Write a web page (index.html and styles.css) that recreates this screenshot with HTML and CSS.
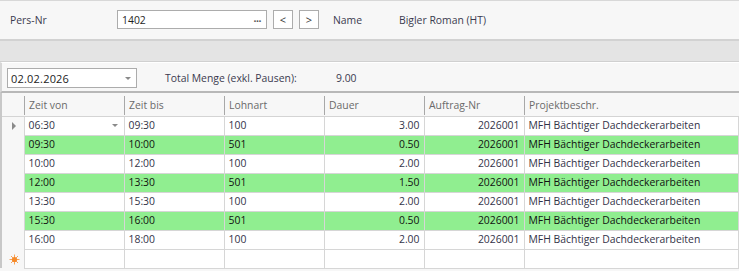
FILE: index.html
```html
<!DOCTYPE html>
<html lang="de">
<head>
    <meta charset="UTF-8">
    <title>Zeiterfassung</title>
    <link rel="stylesheet" href="styles.css">
</head>
<body>
    <div class="top-panel">
        <span class="label label-pers">Pers-Nr</span>
        <div class="textbox">
            <span>1402</span>
            <span class="ellipsis">...</span>
        </div>
        <button class="nav-btn">&lt;</button>
        <button class="nav-btn">&gt;</button>
        <span class="label label-name">Name</span>
        <span class="label">Bigler Roman (HT)</span>
    </div>

    <div class="band"></div>

    <div class="filter-panel">
        <div class="combo">
            <span>02.02.2026</span>
            <span class="combo-arrow"></span>
        </div>
        <span class="label label-total">Total Menge (exkl. Pausen):</span>
        <span class="label">9.00</span>
    </div>

    <table class="grid">
        <thead>
            <tr>
                <th class="indicator"></th>
                <th><span>Zeit von</span></th>
                <th><span>Zeit bis</span></th>
                <th><span>Lohnart</span></th>
                <th><span>Dauer</span></th>
                <th><span>Auftrag-Nr</span></th>
                <th class="last"><span>Projektbeschr.</span></th>
            </tr>
        </thead>
        <tbody>
            <tr>
                <td class="indicator"><span class="row-arrow"></span></td>
                <td><div class="editor">06:30<span class="cell-arrow"></span></div></td>
                <td>09:30</td>
                <td>100</td>
                <td class="num">3.00</td>
                <td class="num">2026001</td>
                <td>MFH Bächtiger Dachdeckerarbeiten</td>
            </tr>
            <tr class="pause">
                <td class="indicator"></td>
                <td>09:30</td>
                <td>10:00</td>
                <td>501</td>
                <td class="num">0.50</td>
                <td class="num">2026001</td>
                <td>MFH Bächtiger Dachdeckerarbeiten</td>
            </tr>
            <tr>
                <td class="indicator"></td>
                <td>10:00</td>
                <td>12:00</td>
                <td>100</td>
                <td class="num">2.00</td>
                <td class="num">2026001</td>
                <td>MFH Bächtiger Dachdeckerarbeiten</td>
            </tr>
            <tr class="pause">
                <td class="indicator"></td>
                <td>12:00</td>
                <td>13:30</td>
                <td>501</td>
                <td class="num">1.50</td>
                <td class="num">2026001</td>
                <td>MFH Bächtiger Dachdeckerarbeiten</td>
            </tr>
            <tr>
                <td class="indicator"></td>
                <td>13:30</td>
                <td>15:30</td>
                <td>100</td>
                <td class="num">2.00</td>
                <td class="num">2026001</td>
                <td>MFH Bächtiger Dachdeckerarbeiten</td>
            </tr>
            <tr class="pause">
                <td class="indicator"></td>
                <td>15:30</td>
                <td>16:00</td>
                <td>501</td>
                <td class="num">0.50</td>
                <td class="num">2026001</td>
                <td>MFH Bächtiger Dachdeckerarbeiten</td>
            </tr>
            <tr>
                <td class="indicator"></td>
                <td>16:00</td>
                <td>18:00</td>
                <td>100</td>
                <td class="num">2.00</td>
                <td class="num">2026001</td>
                <td>MFH Bächtiger Dachdeckerarbeiten</td>
            </tr>
            <tr class="new-row">
                <td class="indicator">
                    <svg width="11" height="11" viewBox="0 0 11 11">
                        <g stroke="#f7a35c" stroke-width="1">
                            <line x1="5.5" y1="0.5" x2="5.5" y2="10.5"/>
                            <line x1="0.5" y1="5.5" x2="10.5" y2="5.5"/>
                            <line x1="2" y1="2" x2="9" y2="9"/>
                            <line x1="9" y1="2" x2="2" y2="9"/>
                        </g>
                        <circle cx="5.5" cy="5.5" r="2.6" fill="#f58a2a"/>
                    </svg>
                </td>
                <td></td>
                <td></td>
                <td></td>
                <td></td>
                <td></td>
                <td></td>
            </tr>
        </tbody>
    </table>
</body>
</html>
```

FILE: styles.css
```css
* {
    box-sizing: border-box;
    margin: 0;
    padding: 0;
}

body {
    width: 739px;
    background: #f7f7f7;
    font-family: "Open Sans", "Liberation Sans", sans-serif;
    font-size: 10.4px;
    color: #1e1e1e;
    overflow: hidden;
}

.label {
    color: #3b3b4f;
    white-space: nowrap;
}

/* Kopfbereich mit Personalnummer */
.top-panel {
    height: 41px;
    display: flex;
    align-items: center;
    padding: 0 0 1px 10px;
    border-top: 1px solid #d8d8d8;
    border-bottom: 2px solid #d2d2d2;
    background: #f7f7f7;
}

.label-pers {
    width: 107px;
}

.textbox {
    width: 150px;
    height: 19px;
    display: flex;
    align-items: center;
    justify-content: space-between;
    padding: 0 5px 0 4px;
    background: #fff;
    border: 1px solid #acacac;
}

.ellipsis {
    color: #555;
    font-weight: bold;
    letter-spacing: -0.5px;
    line-height: 1;
    margin-top: -3px;
}

.nav-btn {
    width: 20px;
    height: 19px;
    margin-left: 6px;
    background: #fff;
    border: 1px solid #acacac;
    font-family: inherit;
    font-size: 11px;
    color: #333;
    line-height: 15px;
}

.label-name {
    margin-left: 14px;
    width: 66px;
}

/* graues Band */
.band {
    height: 21px;
    background: #e4e4e4;
    border-bottom: 1px solid #d0d0d0;
}

/* Datumsauswahl */
.filter-panel {
    height: 31px;
    display: flex;
    align-items: center;
    padding: 4px 0 2px 7px;
    border-top: 1px solid #ffffff;
    border-left: 2px solid #d6d6d6;
    border-bottom: 2px solid #b8b8b8;
    background: #f7f7f7;
}

.combo {
    width: 130px;
    height: 20px;
    margin-left: -2px;
    display: flex;
    align-items: center;
    justify-content: space-between;
    padding: 0 5px 0 3px;
    background: #fff;
    border: 1px solid #acacac;
    font-size: 11px;
    letter-spacing: 0.2px;
    color: #222;
}

.combo-arrow,
.cell-arrow {
    width: 0;
    height: 0;
    border-left: 3.5px solid transparent;
    border-right: 3.5px solid transparent;
    border-top: 3.5px solid #8a8a8a;
}

.label-total {
    margin-left: 28px;
    width: 171px;
}

/* Tabelle */
.grid {
    border-collapse: collapse;
    table-layout: fixed;
    width: 739px;
    border-left: 2px solid #c8c8c8;
}

.grid th,
.grid td {
    width: 100px;
    height: 19px;
    padding: 0 4px;
    white-space: nowrap;
    overflow: hidden;
    text-align: left;
}

.grid th.indicator,
.grid td.indicator {
    width: 23px;
    padding: 0;
}

.grid th.last {
    width: auto;
}

.grid thead th {
    height: 23px;
    font-weight: normal;
    color: #6a6a6a;
    background: #f7f7f7;
    border-bottom: 1px solid #d4d4d4;
    padding: 3px 0 0 0;
}

.grid thead th span {
    display: block;
    height: 19px;
    line-height: 18px;
    padding-left: 4px;
    border-left: 1px solid #a8a8a8;
}

.grid tbody td {
    background: #fff;
    border: 1px solid #d6d6d6;
    color: #333348;
    line-height: 17px;
}

.grid tbody td.indicator {
    background: #f7f7f7;
    border-top: none;
    border-bottom: none;
    border-left: none;
    text-align: center;
}

.grid tbody tr.pause td {
    background: #90ee90;
    color: #111;
}

.grid tbody tr.pause td.indicator {
    background: #f7f7f7;
}

.grid td.num {
    text-align: right;
    padding-right: 4px;
}

.editor {
    display: flex;
    align-items: center;
    justify-content: space-between;
    padding-right: 2px;
}

.row-arrow {
    display: inline-block;
    width: 0;
    height: 0;
    margin-left: 2px;
    border-top: 4px solid transparent;
    border-bottom: 4px solid transparent;
    border-left: 4px solid #8a8a8a;
    vertical-align: middle;
}

.new-row svg {
    display: block;
    margin: 1px auto 0 7px;
}
```
